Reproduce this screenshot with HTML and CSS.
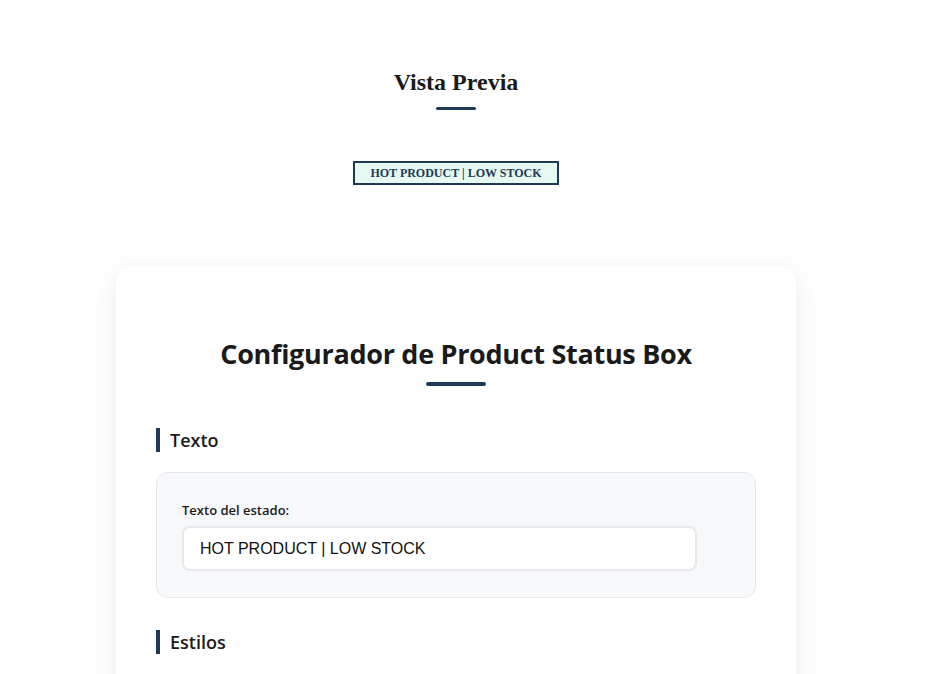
FILE: index.html
```
<!DOCTYPE html>
<html lang="es">
<head>
<meta charset="utf-8">
<title>Configurador de Product Status Box</title>
<link rel="stylesheet" href="styles.css">
</head>
<body>
<main class="page">
  <section class="preview">
    <h2 class="preview-title">Vista Previa</h2>
    <div class="status-box">HOT PRODUCT | LOW STOCK</div>
  </section>
  <section class="card">
    <h1 class="card-title">Configurador de Product Status Box</h1>
    <h3 class="section-title">Texto</h3>
    <div class="group">
      <label class="field-label" for="status-text">Texto del estado:</label>
      <input id="status-text" class="field-input" type="text" value="HOT PRODUCT | LOW STOCK">
    </div>
    <h3 class="section-title">Estilos</h3>
  </section>
</main>
</body>
</html>
```
FILE: styles.css
```
* { box-sizing: border-box; }
html, body { margin: 0; padding: 0; background: #fff; }
body { font-family: "Liberation Serif", serif; color: #1a1a1a; overflow: hidden; }

.page {
  display: flex;
  flex-direction: column;
  align-items: center;
  padding-top: 66px;
  padding-right: 21px;
}

.preview {
  display: flex;
  flex-direction: column;
  align-items: center;
}

.preview-title {
  margin: 0;
  font-family: "Liberation Serif", serif;
  font-size: 24px;
  font-weight: bold;
  line-height: 32px;
  color: #1a1a1a;
}
.preview-title::after {
  content: "";
  display: block;
  width: 40px;
  height: 3px;
  border-radius: 2px;
  background: #1e3a56;
  margin: 9px auto 0;
}

.status-box {
  margin-top: 51px;
  border: 2px solid #1e3a56;
  background: #e6f9f2;
  color: #1e3a56;
  font-family: "Liberation Serif", serif;
  font-weight: bold;
  font-size: 12px;
  line-height: 16px;
  padding: 2px 15px;
  white-space: nowrap;
  text-align: center;
}

.card {
  margin-top: 81px;
  width: 680px;
  background: #fff;
  border-radius: 16px;
  box-shadow: 0 6px 30px rgba(0, 0, 0, 0.08);
  padding: 70px 40px 40px;
  font-family: "Open Sans", "Noto Sans", sans-serif;
}

.card-title {
  margin: 0 0 42px;
  text-align: center;
  font-size: 27px;
  font-weight: 700;
  line-height: 36px;
  color: #1a1a1a;
  letter-spacing: -0.3px;
}
.card-title::after {
  content: "";
  display: block;
  width: 60px;
  height: 4px;
  border-radius: 2px;
  background: #1e3a56;
  margin: 10px auto 0;
}

.section-title {
  margin: 0 0 20px;
  font-size: 18px;
  font-weight: 600;
  line-height: 24px;
  color: #1a1a1a;
  border-left: 4px solid #1e3a56;
  padding-left: 10px;
}

.group {
  background: #f7f8fa;
  border: 1px solid #e6e8eb;
  border-radius: 12px;
  padding: 28px 25px 26px;
  margin-bottom: 32px;
  display: flex;
  flex-direction: column;
  align-items: flex-start;
}

.field-label {
  font-size: 13px;
  font-weight: 600;
  line-height: 18px;
  color: #1a1a1a;
  margin-bottom: 7px;
}

.field-input {
  width: 515px;
  height: 45px;
  border: 2px solid #e6e8eb;
  border-radius: 8px;
  background: #fff;
  padding: 0 16px;
  font-family: "Liberation Sans", Arial, sans-serif;
  font-size: 16px;
  color: #111;
  outline: none;
}
```
